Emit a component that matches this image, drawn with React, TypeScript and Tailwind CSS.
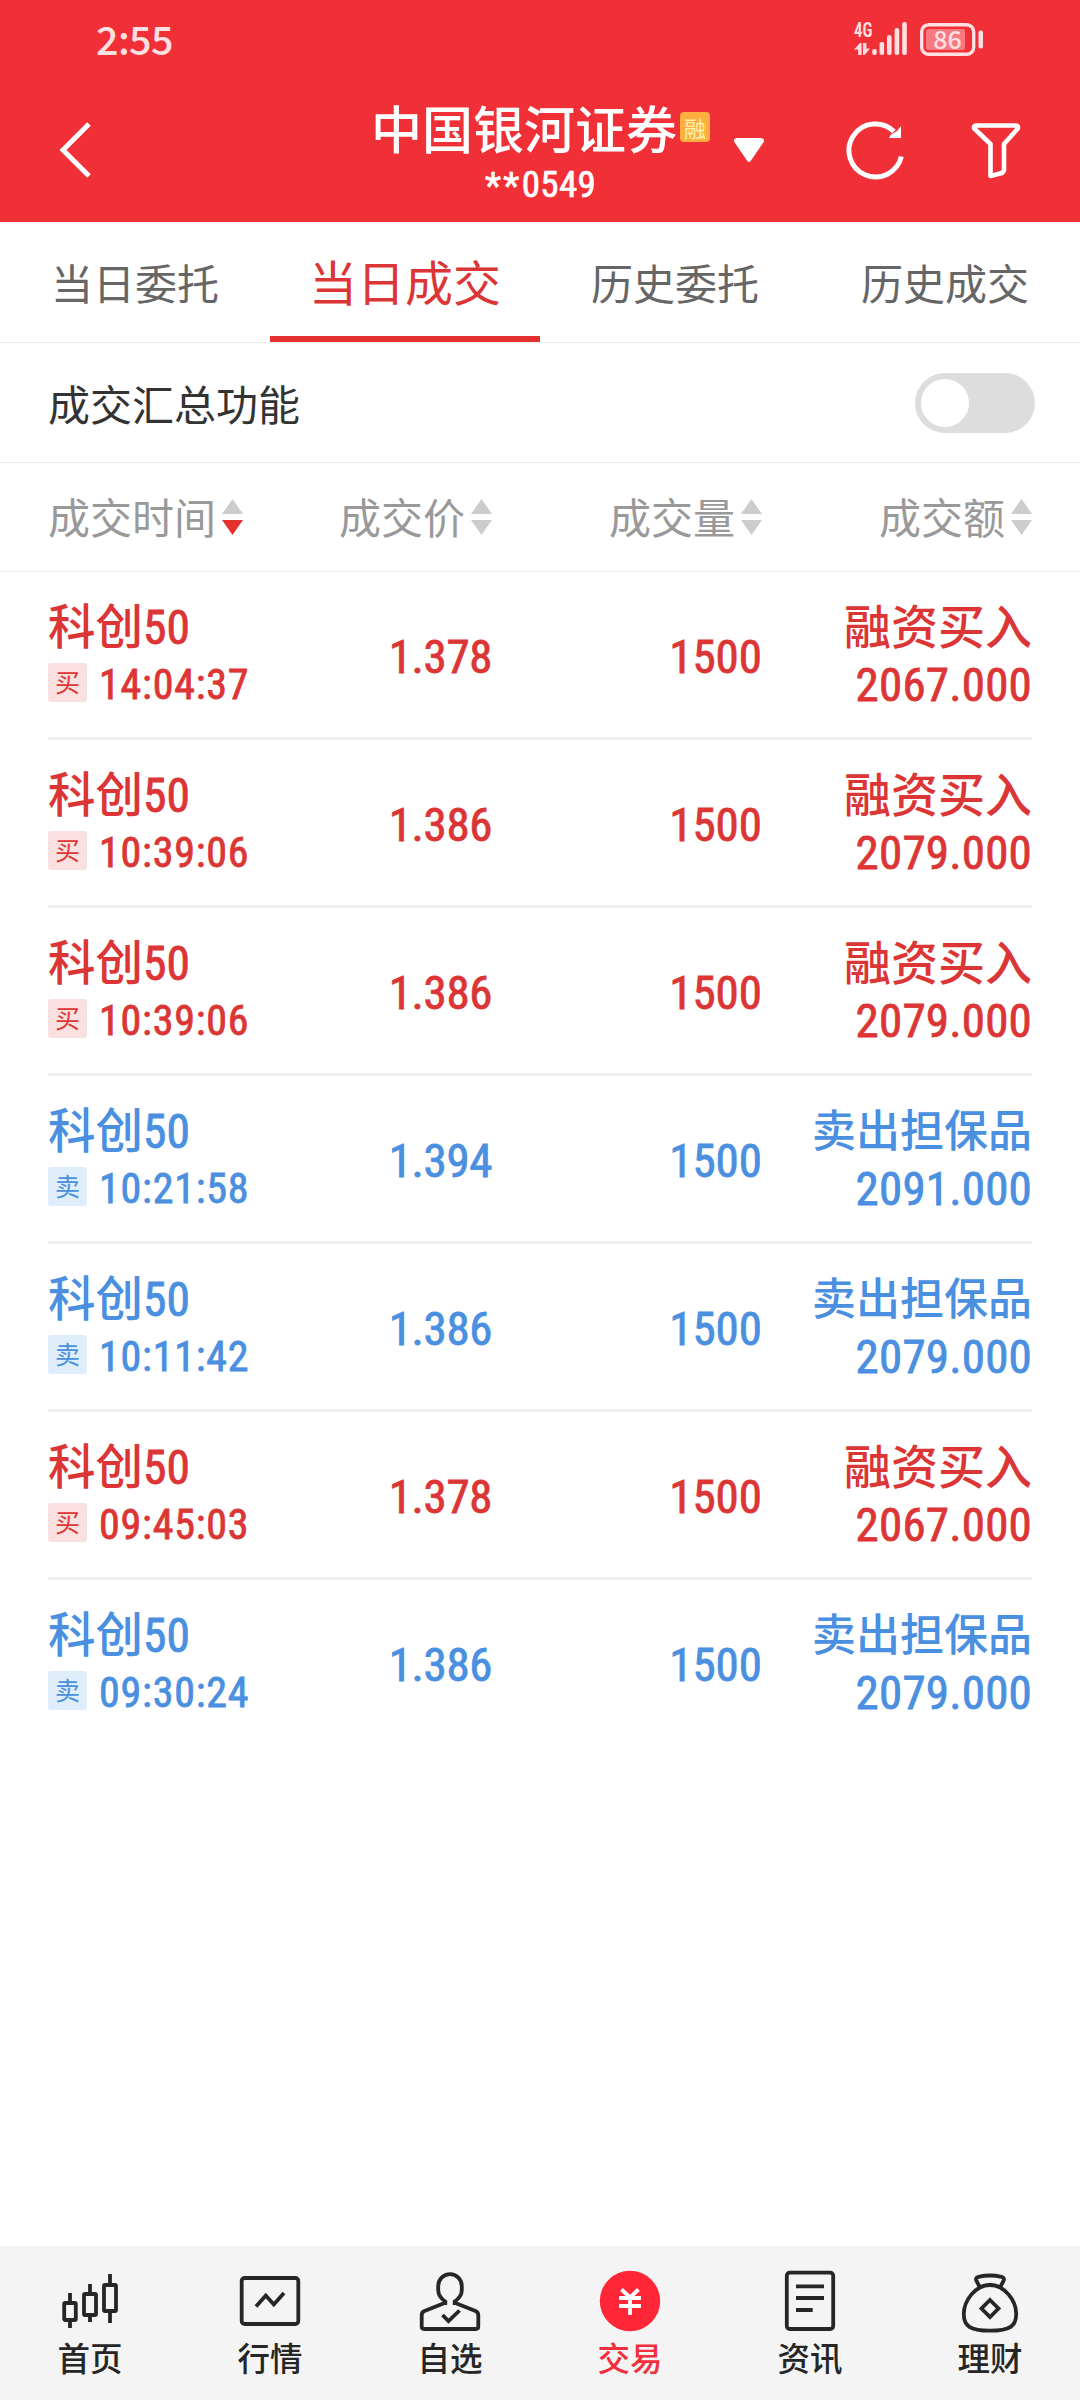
import { useState } from "react";
import type { ReactNode } from "react";

type Deal = {
  name: string;
  code: string;
  time: string;
  price: string;
  volume: string;
  amount: string;
  side: "buy" | "sell";
};

const deals: Deal[] = [
  { name: "科创", code: "50", time: "14:04:37", price: "1.378", volume: "1500", amount: "2067.000", side: "buy" },
  { name: "科创", code: "50", time: "10:39:06", price: "1.386", volume: "1500", amount: "2079.000", side: "buy" },
  { name: "科创", code: "50", time: "10:39:06", price: "1.386", volume: "1500", amount: "2079.000", side: "buy" },
  { name: "科创", code: "50", time: "10:21:58", price: "1.394", volume: "1500", amount: "2091.000", side: "sell" },
  { name: "科创", code: "50", time: "10:11:42", price: "1.386", volume: "1500", amount: "2079.000", side: "sell" },
  { name: "科创", code: "50", time: "09:45:03", price: "1.378", volume: "1500", amount: "2067.000", side: "buy" },
  { name: "科创", code: "50", time: "09:30:24", price: "1.386", volume: "1500", amount: "2079.000", side: "sell" },
];

const tabs = ["当日委托", "当日成交", "历史委托", "历史成交"];
const columns = ["成交时间", "成交价", "成交量", "成交额"];

function StatusBar() {
  return (
    <div className="flex h-[76px] items-center justify-between pl-[96px] pr-[97px] text-[#ffe0e2]">
      <span className="text-[39.5px] font-medium leading-[76px] tracking-[-0.6px]">2:55</span>
      <svg className="overflow-visible" width="129" height="36" viewBox="0 0 129 36" fill="currentColor">
        <text
          x="0"
          y="17"
          fontSize="21"
          fontWeight="600"
          textLength="18.5"
          lengthAdjust="spacingAndGlyphs"
          className="font-['Roboto_Condensed',sans-serif]"
        >
          4G
        </text>
        <path d="M0 29.500 6 23h1.600v12H4.200v-5.500ZM9 23h3.400v5.500H16L10.500 35H9Z" />
        <rect x="18.200" y="29" width="4.600" height="6" rx="2" />
        <rect x="25.500" y="22" width="4.600" height="13" rx="2" />
        <rect x="33" y="15" width="4.600" height="20" rx="2" />
        <rect x="40.600" y="8" width="4.600" height="27" rx="2" />
        <rect x="48.200" y="2" width="4.600" height="33" rx="2" />
        <rect x="67.700" y="4.700" width="52" height="29.600" rx="7" fill="none" stroke="currentColor" strokeWidth="3.400" />
        <rect x="72" y="9" width="39" height="21" rx="2" fill="#f8797e" />
        <rect x="124.500" y="10.500" width="4.500" height="18" rx="2" />
        <text x="93.500" y="29" fontSize="25" fontWeight="500" textAnchor="middle">
          86
        </text>
      </svg>
    </div>
  );
}

function Header() {
  return (
    <header className="h-[222px] bg-[#f12f37] text-white">
      <StatusBar />
      <div className="flex h-[146px]">
        <button className="flex w-[370px] items-center pl-[58px] pt-[2px]">
          <svg width="34" height="58" viewBox="0 0 34 58" fill="none" stroke="currentColor" strokeWidth="5">
            <path d="M31 3 5 29l26 26" />
          </svg>
        </button>

        <div className="flex w-[341px] flex-col items-center pt-[18px]">
          <div className="flex items-center gap-[3px]">
            <h1 className="whitespace-nowrap text-[51px] font-medium leading-[66px]">中国银河证券</h1>
            <span className="flex size-[30px] shrink-0 items-center justify-center rounded-[4px] bg-[#ffaf3d] text-[22px] leading-none text-[#fff0ac]">
              融
            </span>
          </div>
          <div className="flex font-['Roboto_Condensed','Noto_Sans_CJK_SC',sans-serif] text-[37px] leading-[50px] [-webkit-text-stroke:0.7px]">
            <span className="relative top-px tracking-[2.5px]">**</span>
            <span className="tracking-[0.3px]">0549</span>
          </div>
        </div>

        <div className="flex flex-1 items-center pl-[23px] pt-[2px]">
          <svg width="30" height="24" viewBox="0 0 30 24" fill="currentColor">
            <path d="M3 0h24q5 1 2 5L17 22.500q-2 3-4 0L1 5q-3-4 2-5Z" />
          </svg>
          <svg className="ml-[82px]" width="60" height="60" viewBox="0 0 60 60" fill="none">
            <path d="M55.300 36.500A26.500 26.500 0 1 1 48 11.500" stroke="currentColor" strokeWidth="5" />
            <path d="M55 6v12H43l2-3.500 5.500-3Z" fill="currentColor" />
          </svg>
          <svg className="ml-[64px]" width="52" height="60" viewBox="0 0 52 60" fill="none">
            <path
              d="M6 5.500h40q2.500 0 1.800 3L34 24v26.500l-2 2.500-11.500 3V24L4.200 8.500Q3.500 5.500 6 5.500Z"
              stroke="currentColor"
              strokeWidth="4.600"
              strokeLinejoin="round"
            />
          </svg>
        </div>
      </div>
    </header>
  );
}

function SortArrows({ active }: { active: boolean }) {
  return (
    <svg width="21" height="36" viewBox="0 0 21 36">
      <path d="M10.500 0 21 15H0Z" fill="#ccc" />
      <path d="M10.500 36 21 21H0Z" fill={active ? "#e53030" : "#ccc"} />
    </svg>
  );
}

function DealRow({ deal, last }: { deal: Deal; last: boolean }) {
  const buy = deal.side === "buy";
  return (
    <div
      className={`mx-[48px] grid h-[168px] grid-cols-[210px_234px_270px_270px] font-['Roboto_Condensed','Noto_Sans_CJK_SC',sans-serif] text-[47px] leading-[58px] ${
        buy ? "text-[#dc3535]" : "text-[#4a8fe0]"
      } ${last ? "" : "border-b-[3px] border-[#eeeeee]"}`}
    >
      <div className="pt-[26px]">
        <div className="h-[58px] text-[47.5px] leading-[60px]">
          <span className="font-medium">{deal.name}</span>
          <span className="[-webkit-text-stroke:0.8px]">{deal.code}</span>
        </div>
        <div className="flex gap-[12px] text-[42px]">
          <span
            className={`mt-[7px] flex size-[39px] shrink-0 items-center justify-center rounded-[3px] pt-[2px] text-[25px] leading-none ${
              buy ? "bg-[#fae0e0]" : "bg-[#e0edfb]"
            }`}
          >
            {buy ? "买" : "卖"}
          </span>
          <span className="tracking-[0.8px] [-webkit-text-stroke:0.8px]">{deal.time}</span>
        </div>
      </div>
      <div className="pt-[56px] text-right tracking-[-0.4px] [-webkit-text-stroke:0.8px]">{deal.price}</div>
      <div className="pt-[56px] text-right [-webkit-text-stroke:0.8px]">{deal.volume}</div>
      <div className="pt-[26px] text-right">
        <div
          className={`h-[58px] whitespace-nowrap font-medium leading-[60px] ${buy ? "text-[47px]" : "text-[44px]"}`}
        >
          {buy ? "融资买入" : "卖出担保品"}
        </div>
        <div className="tracking-[0.2px] [-webkit-text-stroke:0.8px]">{deal.amount}</div>
      </div>
    </div>
  );
}

function NavItem({ label, active, children }: { label: string; active?: boolean; children: ReactNode }) {
  return (
    <button className={`flex flex-1 flex-col items-center pt-[22px] ${active ? "text-[#f12f3d]" : "text-[#262626]"}`}>
      <svg width="64" height="66" viewBox="0 0 64 66" fill="none" stroke="currentColor" strokeWidth="3.800">
        {children}
      </svg>
      <span className="text-[32.5px] font-medium leading-[46px]">{label}</span>
    </button>
  );
}

function BottomNav() {
  return (
    <nav className="flex h-[154px] bg-[#f4f4f4]">
      <NavItem label="首页">
        <rect x="6.200" y="35" width="11.600" height="17" rx="1" />
        <rect x="26" y="26" width="12" height="21" rx="1" />
        <rect x="46" y="17" width="12" height="26" rx="1" />
        <path d="M12 25v9M12 53v7M32 16v9M32 48v6M52 6v10M52 44v11" />
      </NavItem>
      <NavItem label="行情">
        <rect x="3.700" y="10" width="56.600" height="46" rx="3" />
        <path d="m18 38.500 9.800-11 8 9L46 25" />
      </NavItem>
      <NavItem label="自选">
        <path d="M27.300 37v-3.500C22 30 20.200 26 20.200 22v-4a11.800 11.800 0 0 1 23.600 0v4c0 4-1.800 8-7.100 11.500V37" />
        <path d="M27.300 34.800 6.500 43q-2.800 1.300-2.800 4v11.500q0 2.500 2.500 2.500h51.600q2.500 0 2.500-2.500V47q0-2.700-2.800-4l-20.800-8.200" />
        <path d="m24.500 47 6 6L41.500 42.500" />
      </NavItem>
      <NavItem label="交易" active>
        <circle cx="32" cy="33" r="30.200" fill="#ff2638" stroke="none" />
        <path d="m23.500 21.500 8.500 8 8.500-8M32 29v18M21 30h22M21 38h22" stroke="#fff" />
      </NavItem>
      <NavItem label="资讯">
        <rect x="8.800" y="4.700" width="46.400" height="56.300" rx="3" />
        <path d="M18 18.300h28M18 30h28M18 42h16.700" />
      </NavItem>
      <NavItem label="理财">
        <path d="M22.500 20.500 18.500 13q-1.500-3.300 2-4.200 11.500-2.600 23 0 3.500.900 2 4.200l-4 7.500" />
        <path d="M32 17C17 17 5.800 33 5.800 46 5.800 58 12 62.700 32 62.700S58.200 58 58.200 46C58.200 33 47 17 32 17Z" />
        <path d="m32 32 8.500 8.500L32 49l-8.500-8.500Z" />
      </NavItem>
    </nav>
  );
}

export default function App() {
  const [tab, setTab] = useState(1);
  const [summary, setSummary] = useState(false);

  return (
    <div className="flex h-[2400px] w-[1080px] flex-col overflow-hidden bg-white font-['Noto_Sans_CJK_SC',sans-serif]">
      <Header />

      <div className="flex h-[121px] border-b border-[#ececec]">
        {tabs.map((t, i) => (
          <button
            key={t}
            onClick={() => setTab(i)}
            className={`flex-1 border-b-[6px] ${
              i === tab
                ? "border-[#e53030] pt-[2px] text-[48px] text-[#dc3535]"
                : "border-transparent pt-[4px] text-[42px] text-[#666]"
            }`}
          >
            {t}
          </button>
        ))}
      </div>

      <div className="flex h-[120px] items-center justify-between border-b border-[#ececec] pl-[48px] pr-[45px]">
        <span className="text-[42px] text-[#333]">成交汇总功能</span>
        <button
          onClick={() => setSummary(!summary)}
          className={`flex h-[60px] w-[120px] rounded-full p-[6px] ${summary ? "justify-end bg-[#e53030]" : "bg-[#ddd]"}`}
        >
          <span className="size-[48px] rounded-full bg-white" />
        </button>
      </div>

      <div className="grid h-[109px] grid-cols-[210px_234px_270px_270px] border-b border-[#ececec] px-[48px]">
        {columns.map((c, i) => (
          <div key={c} className={`flex items-center gap-[6px] ${i === 0 ? "" : "justify-end"}`}>
            <span className="pb-[4px] text-[42px] text-[#999]">{c}</span>
            <SortArrows active={i === 0} />
          </div>
        ))}
      </div>

      <main className="flex-1">
        {deals.map((d, i) => (
          <DealRow key={i} deal={d} last={i === deals.length - 1} />
        ))}
      </main>

      <BottomNav />
    </div>
  );
}
